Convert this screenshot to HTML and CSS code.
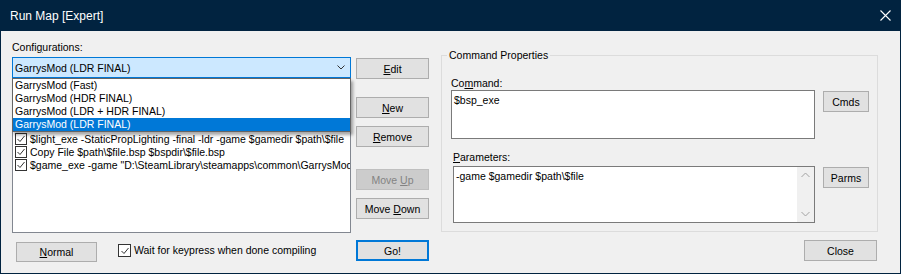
FILE: index.html
```html
<!DOCTYPE html>
<html lang="en">
<head>
    <meta charset="UTF-8">
    <title>Run Map [Expert]</title>
    <link rel="stylesheet" href="styles.css">
</head>

<body>

    <div class="window">
        <div class="titlebar">
            <span class="title">Run Map [Expert]</span>
            <svg class="close-x" width="11" height="11" viewBox="0 0 11 11">
                <path d="M0.5 0.5 L10.5 10.5 M10.5 0.5 L0.5 10.5" stroke="#fff" stroke-width="1.1" fill="none"/>
            </svg>
        </div>

        <div class="content">
            <div class="main">
                <div class="configs">
                    <div class="label">Confi<u>g</u>urations:</div>
                    <div class="combo">
                        <span>GarrysMod (LDR FINAL)</span>
                        <svg width="8" height="5" viewBox="0 0 8 5">
                            <path d="M0.5 0.5 L4 4 L7.5 0.5" stroke="#333" fill="none"/>
                        </svg>
                    </div>

                    <ul class="dropdown">
                        <li>GarrysMod (Fast)</li>
                        <li>GarrysMod (HDR FINAL)</li>
                        <li>GarrysMod (LDR + HDR FINAL)</li>
                        <li class="selected">GarrysMod (LDR FINAL)</li>
                    </ul>

                    <!-- top rows sit under the open dropdown -->
                    <ul class="commands">
                        <li><span class="check"></span>$light_exe -StaticPropLighting -final -ldr -game $gamedir $path\$file</li>
                        <li><span class="check"></span>Copy File $path\$file.bsp $bspdir\$file.bsp</li>
                        <li><span class="check"></span>$game_exe -game "D:\SteamLibrary\steamapps\common\GarrysMod\garrysmod" +map $file</li>
                    </ul>
                </div>

                <div class="buttons">
                    <button class="btn"><u>E</u>dit</button>
                    <button class="btn btn-new"><u>N</u>ew</button>
                    <button class="btn btn-near"><u>R</u>emove</button>
                    <button class="btn btn-up" disabled>Move <u>U</u>p</button>
                    <button class="btn btn-near">Move <u>D</u>own</button>
                </div>

                <div class="group">
                    <div class="group-title">Command Properties</div>

                    <div class="field-label">Co<u>m</u>mand:</div>
                    <div class="field-row">
                        <div class="textbox cmd-box">$bsp_exe</div>
                        <button class="btn btn-small">Cmds</button>
                    </div>

                    <div class="params">
                        <div class="field-label params-label"><u>P</u>arameters:</div>
                        <div class="field-row">
                            <div class="textbox param-box">
                                <span class="text">-game $gamedir $path\$file</span>
                                <div class="scrollbar">
                                    <svg width="17" height="17" viewBox="0 0 17 17">
                                        <path d="M4.5 10 L8.5 6 L12.5 10" stroke="#a3a3a3" fill="none"/>
                                    </svg>
                                    <svg width="17" height="17" viewBox="0 0 17 17">
                                        <path d="M4.5 7 L8.5 11 L12.5 7" stroke="#a3a3a3" fill="none"/>
                                    </svg>
                                </div>
                            </div>
                            <button class="btn btn-small">Parms</button>
                        </div>
                    </div>
                </div>
            </div>

            <div class="footer">
                <div class="footer-left">
                    <button class="btn btn-normal"><u>N</u>ormal</button>
                    <label class="wait"><span class="check"></span>Wait for keypress when done compiling</label>
                </div>
                <button class="btn btn-go">Go!</button>
                <button class="btn btn-close">Close</button>
            </div>
        </div>
    </div>

</body>
</html>
```

FILE: styles.css
```css
body {
    margin: 0;
    font-family: 'Liberation Sans', Arial, sans-serif;
    font-size: 10.5px;
    color: #000;
    background-color: #f0f0f0;
}
.window {
    width: 901px;
    height: 274px;
    box-sizing: border-box;
    border: 1px solid #012340;
    border-top: none;
    background: #f0f0f0;
    overflow: hidden;
}
.titlebar {
    height: 31px;
    background: #012340;
    color: #fff;
    font-size: 12px;
    display: flex;
    align-items: center;
    justify-content: space-between;
    padding: 0 9px;
}
.content {
    padding: 10px 21px 0 11px;
}
.main {
    display: flex;
    align-items: flex-start;
}
.configs {
    width: 339px;
    position: relative;
}
.label {
    line-height: 13px;
}
.combo {
    margin-top: 3px;
    height: 21px;
    box-sizing: border-box;
    border: 1px solid #0078d7;
    background: #cce8ff;
    display: flex;
    align-items: center;
    justify-content: space-between;
    padding: 0 5px 0 2px;
}
.dropdown {
    position: absolute;
    top: 37px;
    left: 0;
    width: 339px;
    box-sizing: border-box;
    margin: 0;
    padding: 0;
    list-style: none;
    border: 1px solid #646464;
    background: #fff;
    box-shadow: 2px 3px 3px rgba(0,0,0,0.35);
    z-index: 2;
}
.dropdown li {
    height: 13px;
    line-height: 13px;
    padding-left: 2px;
}
.dropdown li.selected {
    background: #0078d7;
    color: #fff;
}
.commands {
    margin: 12px 0 0;
    padding: 41px 0 0;
    list-style: none;
    height: 143px;
    box-sizing: border-box;
    border: 1px solid #828790;
    background: #fff;
    overflow: hidden;
}
.commands li {
    display: flex;
    align-items: center;
    height: 13px;
    padding-left: 2px;
    gap: 3px;
    white-space: nowrap;
}
.check {
    flex: none;
    width: 12px;
    height: 12px;
    box-sizing: border-box;
    border: 1px solid #333;
    background: #fff url("data:image/svg+xml,%3Csvg xmlns='http://www.w3.org/2000/svg' width='10' height='10'%3E%3Cpath d='M1.5 5 L4 7.5 L8.5 2' stroke='%23333' fill='none'/%3E%3C/svg%3E") center no-repeat;
}
.buttons {
    margin: 17px 0 0 5px;
    width: 73px;
    display: flex;
    flex-direction: column;
}
.btn {
    height: 21px;
    box-sizing: border-box;
    border: 1px solid #adadad;
    background: #e1e1e1;
    font: inherit;
    color: #000;
    padding: 0;
}
.btn:disabled {
    background: #cccccc;
    border-color: #bfbfbf;
    color: #838383;
}
.btn-new {
    margin-top: 18px;
}
.btn-near {
    margin-top: 8px;
}
.btn-up {
    margin-top: 22px;
}
.group {
    margin: 14px 0 0 12px;
    width: 437px;
    box-sizing: border-box;
    border: 1px solid #dcdcdc;
    padding: 0 7px 8px 9px;
}
.group-title {
    display: table;
    margin: -7px 0 0 -4px;
    padding: 0 2px;
    background: #f0f0f0;
    line-height: 13px;
}
.field-label {
    margin-top: 15px;
    line-height: 13px;
}
.field-row {
    display: flex;
    align-items: flex-start;
    gap: 8px;
}
.textbox {
    box-sizing: border-box;
    border: 1px solid #7a7a7a;
    background: #fff;
    line-height: 13px;
}
.cmd-box {
    width: 364px;
    height: 49px;
    padding: 3px 2px;
}
.params {
    margin-left: 2px;
}
.params-label {
    margin-top: 12px;
}
.params .field-row {
    margin-top: 2px;
}
.param-box {
    width: 362px;
    height: 57px;
    display: flex;
}
.param-box .text {
    flex: 1;
    padding: 3px 2px;
}
.scrollbar {
    width: 17px;
    background: #f0f0f0;
    display: flex;
    flex-direction: column;
    justify-content: space-between;
}
.scrollbar svg {
    display: block;
}
.btn-small {
    width: 46px;
    margin-top: 1px;
}
.footer {
    display: flex;
    align-items: flex-start;
    margin-top: 7px;
}
.footer-left {
    width: 344px;
    display: flex;
    align-items: flex-start;
}
.btn-normal {
    margin: 2px 0 0 4px;
    width: 81px;
    height: 20px;
}
.wait {
    margin: 4px 0 0 21px;
    display: flex;
    align-items: center;
    gap: 3px;
    line-height: 13px;
}
.wait .check {
    width: 13px;
    height: 13px;
}
.btn-go {
    width: 73px;
    border: 2px solid #0078d7;
}
.btn-close {
    width: 73px;
    margin: 0 2px 0 auto;
}
```
